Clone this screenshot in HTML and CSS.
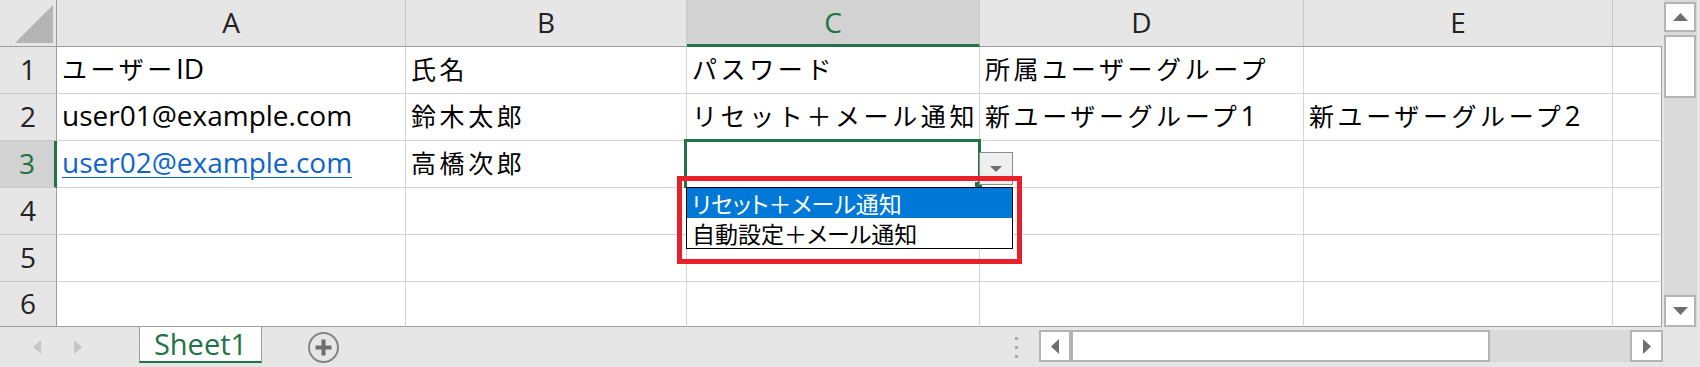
FILE: index.html
```html
<!DOCTYPE html>
<html lang="ja">
<head>
<meta charset="utf-8">
<title>Sheet1</title>
<link rel="stylesheet" href="styles.css">
</head>
<body>
<div class="app">
  <div class="top">
    <div class="sheet">
      <div class="corner"><svg width="56" height="46" viewBox="0 0 56 46"><polygon points="15,43 53,43 53,5" fill="#b4b4b4"/></svg></div>
      <div class="ch">A</div>
      <div class="ch">B</div>
      <div class="ch sel">C</div>
      <div class="ch">D</div>
      <div class="ch">E</div>
      <div class="ch end"></div>

      <div class="rh">1</div>
      <div class="c"><span class="j">ユーザー</span>ID</div>
      <div class="c"><span class="j">氏名</span></div>
      <div class="c"><span class="j">パスワード</span></div>
      <div class="c"><span class="j">所属ユーザーグループ</span></div>
      <div class="c"></div>
      <div class="c edge"></div>

      <div class="rh">2</div>
      <div class="c">user01@example.com</div>
      <div class="c"><span class="j">鈴木太郎</span></div>
      <div class="c"><span class="j">リセット＋メール通知</span></div>
      <div class="c"><span class="j">新ユーザーグループ</span>1</div>
      <div class="c"><span class="j">新ユーザーグループ</span>2</div>
      <div class="c edge"></div>

      <div class="rh sel">3</div>
      <div class="c"><span class="link">user02@example.com</span></div>
      <div class="c"><span class="j">高橋次郎</span></div>
      <div class="c"></div>
      <div class="c"></div>
      <div class="c"></div>
      <div class="c edge"></div>

      <div class="rh">4</div>
      <div class="c"></div>
      <div class="c"></div>
      <div class="c"></div>
      <div class="c"></div>
      <div class="c"></div>
      <div class="c edge"></div>

      <div class="rh">5</div>
      <div class="c"></div>
      <div class="c"></div>
      <div class="c"></div>
      <div class="c"></div>
      <div class="c"></div>
      <div class="c edge"></div>

      <div class="rh b">6</div>
      <div class="c b"></div>
      <div class="c b"></div>
      <div class="c b"></div>
      <div class="c b"></div>
      <div class="c b"></div>
      <div class="c b edge"></div>

      <div class="selbox"></div>
      <div class="handle"></div>
      <div class="ddbtn"><svg width="12" height="6" viewBox="0 0 12 6"><polygon points="0,0 12,0 6,6" fill="#6e6e6e"/></svg></div>
      <div class="ddlist">
        <div class="opt on">リセット＋メール通知</div>
        <div class="opt">自動設定＋メール通知</div>
      </div>
      <div class="mark"></div>
    </div>
    <div class="vs">
      <div class="vtrack">
        <div class="btn up"><svg width="15" height="8" viewBox="0 0 15 8"><polygon points="0,8 15,8 7.5,0" fill="#6e6e6e"/></svg></div>
        <div class="vthumb"></div>
        <div class="vfill"></div>
        <div class="btn down"><svg width="15" height="8" viewBox="0 0 15 8"><polygon points="0,0 15,0 7.5,8" fill="#6e6e6e"/></svg></div>
      </div>
    </div>
  </div>
  <div class="bar">
    <div class="nav">
      <svg width="8" height="14" viewBox="0 0 8 14"><polygon points="8,0 8,14 0,7" fill="#c6c6c6"/></svg>
      <svg width="8" height="14" viewBox="0 0 8 14"><polygon points="0,0 0,14 8,7" fill="#c6c6c6"/></svg>
    </div>
    <div class="tab">Sheet1</div>
    <div class="add"><svg width="27" height="27" viewBox="0 0 27 27"><rect x="5.5" y="11.5" width="16" height="4" fill="#6e6e6e"/><rect x="11.5" y="5.5" width="4" height="16" fill="#6e6e6e"/></svg></div>
    <div class="dots"><i></i><i></i><i></i></div>
    <div class="hs">
      <div class="btn hl"><svg width="8" height="15" viewBox="0 0 8 15"><polygon points="8,0 8,15 0,7.5" fill="#6e6e6e"/></svg></div>
      <div class="hthumb"></div>
      <div class="hfill"></div>
      <div class="btn hr"><svg width="8" height="15" viewBox="0 0 8 15"><polygon points="0,0 0,15 8,7.5" fill="#6e6e6e"/></svg></div>
    </div>
  </div>
</div>
</body>
</html>
```

FILE: styles.css
```css
* {
  box-sizing: border-box;
  margin: 0;
  padding: 0;
}

html,
body {
  width: 1700px;
  height: 367px;
  overflow: hidden;
}

body {
  background: #e6e6e6;
  font-family: "Open Sans", "Noto Sans CJK JP", sans-serif;
  color: #000;
}

.app {
  display: flex;
  flex-direction: column;
  width: 1700px;
  height: 367px;
}

.top {
  display: flex;
  height: 327px;
}

.sheet {
  position: relative;
  display: grid;
  grid-template-columns: 57px 349px 281px 293px 324px 309px 49px;
  grid-template-rows: repeat(6, 47px) 45px;
  width: 1662px;
  height: 327px;
  background: #fff;
}

.corner {
  background: #e6e6e6;
  border-right: 1px solid #9e9e9e;
  border-bottom: 1px solid #9e9e9e;
}

.corner svg {
  display: block;
}

.ch {
  background: #e6e6e6;
  border-right: 1px solid #c8c8c8;
  border-bottom: 1px solid #9e9e9e;
  display: flex;
  align-items: center;
  justify-content: center;
  padding-bottom: 3px;
  font-size: 28px;
  line-height: 1;
  color: #222;
}

.ch.sel {
  background: #d2d2d2;
  border-bottom: 3px solid #217346;
  padding-bottom: 1px;
  color: #217346;
}

.ch.end {
  border-right: none;
}

.rh {
  background: #e6e6e6;
  border-right: 1px solid #9e9e9e;
  border-bottom: 1px solid #c8c8c8;
  display: flex;
  align-items: center;
  justify-content: center;
  padding-bottom: 3px;
  font-size: 28px;
  line-height: 1;
  color: #222;
}

.rh.sel {
  background: #d2d2d2;
  border-right: 3px solid #217346;
  color: #217346;
}

.rh.b {
  border-bottom-color: #9e9e9e;
}

.c {
  border-right: 1px solid #d4d4d4;
  border-bottom: 1px solid #d4d4d4;
  font-size: 28px;
  line-height: 43px;
  padding: 0 0 3px 5px;
  white-space: nowrap;
  overflow: hidden;
}

.c.edge {
  border-right-color: #9e9e9e;
}

.c.b {
  border-bottom-color: #9e9e9e;
}

.j {
  font-family: "Noto Sans CJK JP", sans-serif;
  font-size: 25px;
  letter-spacing: 3.6px;
  line-height: 1;
}

.link {
  color: #0f64c8;
  text-decoration: underline;
  text-decoration-thickness: 1px;
  text-underline-offset: 4px;
}

/* overlays on the sheet */
.selbox {
  position: absolute;
  left: 684px;
  top: 139px;
  width: 297px;
  height: 49px;
  border: 3px solid #217346;
  border-bottom: none;
}

.handle {
  position: absolute;
  left: 975px;
  top: 182px;
  width: 7px;
  height: 6px;
  background: #217346;
}

.ddbtn {
  position: absolute;
  left: 979px;
  top: 152px;
  width: 34px;
  height: 33px;
  background: #efefef;
  border: 1px solid #8c8c8c;
  display: flex;
  align-items: center;
  justify-content: center;
}

.ddlist {
  position: absolute;
  left: 686px;
  top: 187px;
  width: 327px;
  height: 62px;
  border: 1px solid #000;
  background: #fff;
  font-family: "Noto Sans CJK JP", sans-serif;
  font-size: 23px;
  font-feature-settings: "palt";
}

.opt {
  height: 30px;
  line-height: 30px;
  padding-left: 5px;
  white-space: nowrap;
}

.opt.on {
  background: #0078d7;
  color: #fff;
}

.mark {
  position: absolute;
  left: 677px;
  top: 176px;
  width: 345px;
  height: 88px;
  border: 5px solid #e8202a;
}

/* vertical scrollbar */
.vs {
  width: 38px;
  height: 327px;
  padding: 0 3px 0 2px;
}

.vtrack {
  height: 100%;
  background: #dadada;
  display: flex;
  flex-direction: column;
  align-items: flex-start;
  padding-top: 2px;
}

.btn {
  background: #fff;
  border: 2px solid #b4b4b4;
  display: flex;
  align-items: center;
  justify-content: center;
}

.vs .btn {
  width: 32px;
}

.btn.up {
  height: 30px;
}

.btn.down {
  height: 32px;
}

.vthumb {
  margin-top: 3px;
  width: 32px;
  height: 63px;
  background: #fff;
  border: 2px solid #b4b4b4;
}

.vfill {
  flex: 1;
}

/* bottom bar */
.bar {
  display: flex;
  align-items: flex-start;
  height: 40px;
}

.nav {
  width: 139px;
  height: 40px;
  display: flex;
  align-items: center;
  gap: 33px;
  padding-left: 33px;
}

.tab {
  width: 123px;
  height: 37px;
  margin-top: -1px;
  background: #fff;
  border-left: 1px solid #9e9e9e;
  border-right: 1px solid #9e9e9e;
  border-bottom: 2px solid #217346;
  color: #217346;
  font-size: 29px;
  line-height: 1;
  display: flex;
  align-items: center;
  justify-content: center;
}

.add {
  margin: 5px 0 0 46px;
  width: 31px;
  height: 31px;
  border: 2px solid #858585;
  border-radius: 50%;
}

.add svg {
  display: block;
}

.dots {
  margin: 10px 0 0 676px;
  display: flex;
  flex-direction: column;
  gap: 6px;
}

.dots i {
  display: block;
  width: 3px;
  height: 3px;
  background: #ababab;
}

.hs {
  margin: 3px 0 0 21px;
  width: 624px;
  height: 32px;
  display: flex;
  background: #dadada;
}

.btn.hl {
  width: 32px;
}

.btn.hr {
  width: 33px;
}

.hthumb {
  width: 419px;
  background: #fff;
  border: 2px solid #b4b4b4;
}

.hfill {
  flex: 1;
}
```
